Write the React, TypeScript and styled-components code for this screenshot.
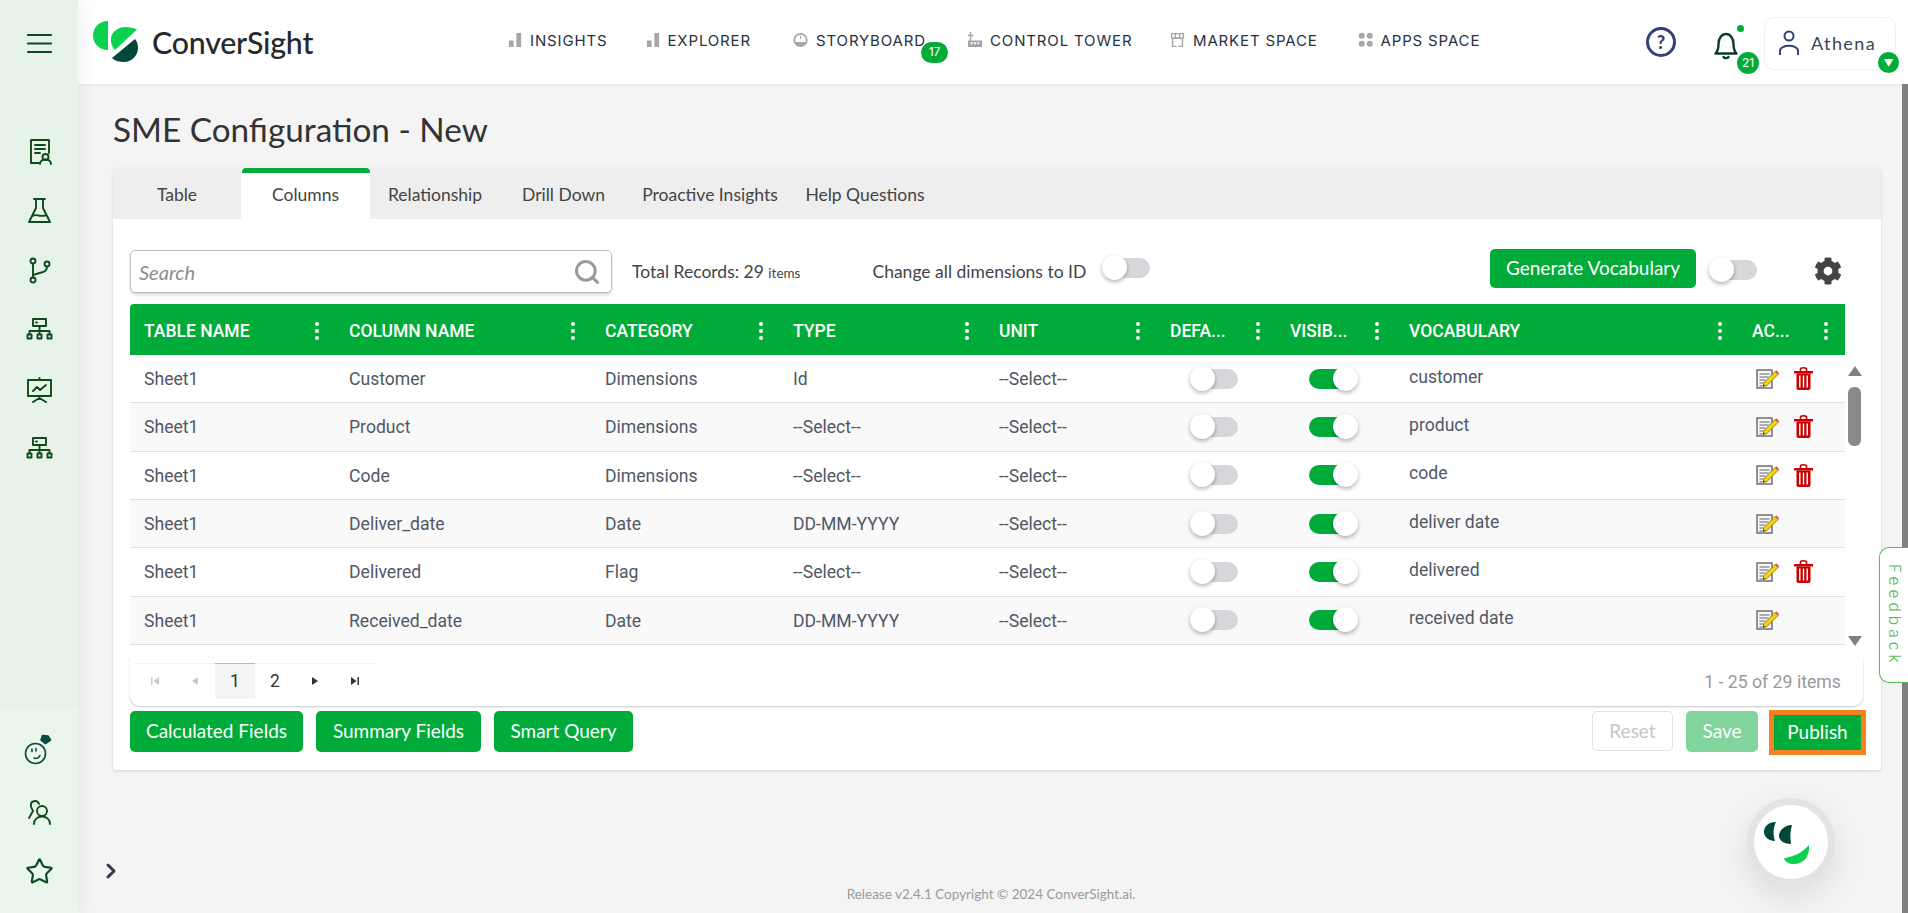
import styled, { createGlobalStyle } from "styled-components";
import { Star, Search as SearchIcon, ChevronRight } from "lucide-react";
import { FaCog } from "react-icons/fa";

const GREEN = "#00ab3a";
const SIDE_INK = "#0f4a1e";
const COLUMNS = "206px 256px 188px 206px 171px 120px 119px 343px 106px";

const GlobalStyle = createGlobalStyle`
  html, body {
    margin: 0;
    height: 100%;
    overflow: hidden;
    background: #f4f4f4;
    font-family: Lato, "Open Sans", sans-serif;
  }
  * { box-sizing: border-box; }
`;

const Shell = styled.div`
  display: flex;
  width: 100%;
  height: 913px;
  position: relative;
  overflow: hidden;
`;

const Sidebar = styled.aside`
  width: 78px;
  flex: none;
  display: flex;
  flex-direction: column;
  background: #e7f3e8;
  box-shadow: 6px 0 14px rgba(0, 0, 0, 0.05);
  z-index: 2;
`;

const SideTop = styled.div`
  flex: 1;
  display: flex;
  flex-direction: column;
  align-items: center;
  gap: 30.6px;
`;

const SideBottom = styled.div`
  height: 204px;
  flex: none;
  display: flex;
  flex-direction: column;
  align-items: center;
  gap: 30.6px;
  padding-top: 28px;
  background: #eaf5ec;
  border-top: 1px solid #eef6ef;
`;

const Burger = styled.div`
  height: 136.5px;
  padding-top: 28.5px;
  margin-bottom: -30.6px;
  display: flex;
  justify-content: center;
  flex: none;
`;

const SideIcon = styled.svg<{ $w?: number }>`
  width: 29px;
  height: 29px;
  fill: none;
  stroke: ${SIDE_INK};
  stroke-width: ${(p) => p.$w ?? 1.9};
  stroke-linecap: round;
  stroke-linejoin: round;
  flex: none;
  overflow: visible;
`;

const Column = styled.div`
  flex: 1;
  min-width: 0;
  display: flex;
  flex-direction: column;
`;

const Header = styled.header`
  height: 84px;
  flex: none;
  background: #fff;
  display: flex;
  align-items: flex-start;
  position: relative;
  box-shadow: 0 1px 3px rgba(0, 0, 0, 0.05);
`;

const LogoBox = styled.div`
  width: 429px;
  flex: none;
  display: flex;
  align-items: center;
  padding: 20px 0 0 15px;
  gap: 13px;
`;

const LogoText = styled.span`
  font-family: Lato, sans-serif;
  font-size: 30.3px;
  font-weight: 500;
  color: #26282b;
  letter-spacing: -0.2px;
  line-height: 42px;
  margin-top: 1px;
`;

const Nav = styled.nav`
  display: flex;
  height: 80px;
  align-items: center;
`;

const NavItem = styled.div<{ $w: number }>`
  width: ${(p) => p.$w}px;
  display: flex;
  align-items: center;
  gap: 7px;
  font-family: Inter, sans-serif;
  font-size: 15px;
  font-weight: 400;
  letter-spacing: 0.85px;
  color: #27323f;
  white-space: nowrap;
  position: relative;
`;

const NavGlyph = styled.svg`
  width: 16px;
  height: 16px;
  fill: #a6a6a6;
  flex: none;
`;

const Pill = styled.span`
  position: absolute;
  background: ${GREEN};
  color: #fff;
  font-family: Inter, sans-serif;
  font-size: 12px;
  letter-spacing: 0;
  line-height: 1;
  display: flex;
  align-items: center;
  justify-content: center;
`;

const StoryBadge = styled(Pill)`
  left: 128px;
  top: 11px;
  width: 27px;
  height: 21px;
  border-radius: 11px;
`;

const HeaderRight = styled.div`
  margin-left: auto;
  display: flex;
  align-items: flex-start;
  padding: 17px 12px 0 0;
`;

const HelpCircle = styled.div`
  width: 30px;
  height: 30px;
  margin: 10px 38px 0 0;
  border: 3px solid #33407a;
  border-radius: 50%;
  color: #33407a;
  font-size: 18px;
  font-weight: 900;
  display: flex;
  align-items: center;
  justify-content: center;
`;

const BellBox = styled.div`
  width: 38px;
  height: 40px;
  margin: 15px 12px 0 0;
  position: relative;
`;

const BellDot = styled.span`
  position: absolute;
  left: 22.5px;
  top: -7.5px;
  width: 7px;
  height: 7px;
  border-radius: 50%;
  background: ${GREEN};
`;

const BellBadge = styled(Pill)`
  left: 23px;
  top: 20px;
  width: 22px;
  height: 22px;
  border-radius: 50%;
`;

const UserBox = styled.div`
  width: 132px;
  height: 53px;
  padding: 0 0 2px 12px;
  border: 1px solid #eef0f2;
  border-radius: 10px;
  display: flex;
  align-items: center;
  gap: 10px;
  font-size: 18px;
  letter-spacing: 1.4px;
  color: #3a4354;
  position: relative;
`;

const UserCaret = styled(Pill)`
  right: -4px;
  top: 34px;
  width: 21px;
  height: 21px;
  border-radius: 50%;
  font-size: 10px;
`;

const Main = styled.main`
  flex: 1;
  min-height: 0;
  display: flex;
  flex-direction: column;
  padding: 0 27px 0 35px;
`;

const Title = styled.h1`
  margin: 0;
  height: 84px;
  display: flex;
  align-items: center;
  padding-top: 6px;
  font-size: 33.3px;
  font-weight: 400;
  color: #333;
`;

const Card = styled.section`
  height: 602px;
  background: #fff;
  border-radius: 3px;
  box-shadow: 0 1px 3px rgba(0, 0, 0, 0.14);
  flex: none;
`;

const Tabs = styled.div`
  height: 51px;
  display: flex;
  background: #eeeeee;
  border-radius: 3px 3px 0 0;
`;

const Tab = styled.div<{ $w: number; $active?: boolean }>`
  width: ${(p) => p.$w}px;
  padding-top: 2.5px;
  display: flex;
  align-items: center;
  justify-content: center;
  font-size: 17.5px;
  color: #444;
  background: ${(p) => (p.$active ? "#fff" : "transparent")};
  position: relative;
  &::before {
    content: "";
    display: ${(p) => (p.$active ? "block" : "none")};
    position: absolute;
    left: 1px;
    right: 0;
    top: 0;
    height: 5px;
    border-radius: 4px 4px 0 0;
    background: ${GREEN};
  }
`;

const Body = styled.div`
  padding: 30px 18px 0 17px;
`;

const Toolbar = styled.div`
  height: 55px;
  display: flex;
  align-items: flex-start;
`;

const SearchBox = styled.div`
  width: 482px;
  height: 43px;
  margin-top: 1px;
  padding: 0 10px 0 8px;
  display: flex;
  align-items: center;
  justify-content: space-between;
  background: #fff;
  border: 1px solid #b9bec6;
  border-radius: 5px;
  box-shadow: 0 2px 3px rgba(70, 80, 100, 0.2);
  font-size: 20px;
  font-style: italic;
  color: #8d8d8d;
`;

const ToolText = styled.div<{ $ml: number }>`
  margin: 12px 0 0 ${(p) => p.$ml}px;
  font-size: 17.5px;
  color: #444;
  white-space: nowrap;
  line-height: 22px;
`;

const Small = styled.span`
  font-size: 13.5px;
`;

const Switch = styled.div<{ $on?: boolean }>`
  width: 49px;
  height: 26px;
  position: relative;
  flex: none;
  &::before {
    content: "";
    position: absolute;
    left: ${(p) => (p.$on ? "0" : "6px")};
    right: ${(p) => (p.$on ? "6px" : "1px")};
    top: 3px;
    height: 20px;
    border-radius: 10px;
    background: ${(p) => (p.$on ? GREEN : "#d6d7da")};
  }
  &::after {
    content: "";
    position: absolute;
    left: ${(p) => (p.$on ? "24px" : "0")};
    top: 0;
    width: 25px;
    height: 25px;
    border-radius: 50%;
    background: #fff;
    box-shadow: 0 2px 4px rgba(0, 0, 0, 0.3);
  }
`;

const ToolSwitch = styled(Switch)<{ $ml: number; $mt: number }>`
  margin: ${(p) => p.$mt}px 0 0 ${(p) => p.$ml}px;
`;

const GreenButton = styled.button<{ $w: number }>`
  width: ${(p) => p.$w}px;
  height: 41px;
  flex: none;
  border: 0;
  border-radius: 5px;
  background: ${GREEN};
  color: #fff;
  font-family: Lato, sans-serif;
  font-size: 19px;
  padding: 0 0 3px;
`;

const GenerateButton = styled(GreenButton)`
  margin: 0 0 0 auto;
  height: 39px;
`;

const Gear = styled.div`
  width: 30px;
  margin: 8px 19px 0 56px;
  color: #444;
  display: flex;
`;

const TableArea = styled.div`
  display: flex;
  height: 353px;
`;

const Table = styled.div`
  width: 1715px;
  flex: none;
  display: flex;
  flex-direction: column;
`;

const HeadRow = styled.div`
  height: 51px;
  flex: none;
  display: grid;
  grid-template-columns: ${COLUMNS};
  background: ${GREEN};
  border-radius: 4px 0 0 0;
`;

const HeadCell = styled.div`
  padding: 2px 17px 0 13px;
  display: flex;
  align-items: center;
  justify-content: space-between;
  color: #fff;
  font-family: Roboto, sans-serif;
  font-size: 17.5px;
  font-weight: 500;
  white-space: nowrap;
  &:first-child {
    padding-left: 14px;
  }
`;

const Dots = styled.span`
  display: flex;
  flex-direction: column;
  gap: 3px;
  & > i {
    width: 4px;
    height: 4px;
    border-radius: 50%;
    background: #fff;
  }
`;

const Row = styled.div<{ $alt?: boolean }>`
  height: 48.33px;
  flex: none;
  display: grid;
  grid-template-columns: ${COLUMNS};
  background: ${(p) => (p.$alt ? "#f9f9f9" : "#fff")};
  border-bottom: 1px solid #dedfe1;
`;

const Cell = styled.div<{ $up?: boolean }>`
  padding: ${(p) => (p.$up ? "0 0 4px 13px" : "1px 0 0 13px")};
  display: flex;
  align-items: center;
  font-family: Roboto, sans-serif;
  font-size: 17.6px;
  color: #505866;
  white-space: nowrap;
  &:first-child {
    padding-left: 14px;
  }
`;

const SwitchCell = styled.div<{ $pr: number }>`
  display: flex;
  align-items: center;
  justify-content: center;
  padding-right: ${(p) => p.$pr}px;
`;

const ActionCell = styled.div`
  display: flex;
  align-items: center;
  gap: 15px;
  padding-left: 17px;
`;

const Scroller = styled.div`
  flex: 1;
  padding: 62px 1px 11px 2px;
  display: flex;
  flex-direction: column;
  align-items: center;
`;

const ArrowUp = styled.span`
  width: 0;
  height: 0;
  border-left: 7px solid transparent;
  border-right: 7px solid transparent;
  border-bottom: 10px solid #808080;
`;

const ArrowDown = styled.span`
  width: 0;
  height: 0;
  margin-top: auto;
  border-left: 7px solid transparent;
  border-right: 7px solid transparent;
  border-top: 10px solid #808080;
`;

const Thumb = styled.span`
  width: 13px;
  height: 59px;
  margin-top: 11px;
  border-radius: 6px;
  background: #8a8a8a;
`;

const Pager = styled.div`
  height: 49px;
  width: 1733px;
  display: flex;
  align-items: center;
  justify-content: space-between;
  padding: 0 22px 0 0;
  background: #fff;
  border-radius: 0 0 10px 10px;
  box-shadow: 0 1px 2px rgba(60, 70, 90, 0.3);
`;

const PageList = styled.div`
  display: flex;
  padding-left: 5px;
`;

const PageButton = styled.div<{ $active?: boolean; $dim?: boolean }>`
  width: 40px;
  height: 36px;
  margin-top: -2px;
  display: flex;
  align-items: center;
  justify-content: center;
  font-family: Roboto, sans-serif;
  font-size: 17.5px;
  color: ${(p) => (p.$dim ? "#c9c9c9" : "#333")};
  background: ${(p) => (p.$active ? "#f5f5f5" : "#fff")};
  border-top: 1px solid ${(p) => (p.$active ? "#bbb" : "#f3f3f3")};
`;

const PageInfo = styled.div`
  font-family: Roboto, sans-serif;
  font-size: 17.7px;
  color: #9a9a9a;
`;

const Actions = styled.div`
  display: flex;
  align-items: flex-start;
  margin-top: 5px;
  width: 1736px;
  gap: 13px;
`;

const Reset = styled.button`
  width: 81px;
  height: 40px;
  margin-left: auto;
  padding: 0 0 2px;
  border: 1px solid #e3e3e3;
  border-radius: 5px;
  background: #fff;
  color: #c6c6c6;
  font-family: Lato, sans-serif;
  font-size: 19px;
`;

const Save = styled(GreenButton)`
  background: #80d49c;
`;

const Publish = styled.button`
  width: 97px;
  height: 45px;
  margin-top: -1px;
  margin-left: -2px;
  padding: 0 0 3px;
  border: 5px solid #f58220;
  background: ${GREEN};
  color: #fff;
  font-family: Lato, sans-serif;
  font-size: 19px;
`;

const Foot = styled.div`
  flex: 1;
  display: flex;
  flex-direction: column;
`;

const Toggle = styled.div`
  margin: 89px 0 0 -14px;
  height: 24px;
  color: #333a4a;
  display: flex;
`;

const Copy = styled.div`
  margin-top: 3px;
  padding-right: 12px;
  text-align: center;
  font-size: 13.5px;
  color: #9b9b9b;
`;

const Feedback = styled.div`
  position: absolute;
  right: 0;
  top: 547px;
  width: 29px;
  height: 136px;
  display: flex;
  align-items: center;
  justify-content: center;
  writing-mode: vertical-rl;
  border: 1px solid #52b95f;
  border-right: 0;
  border-radius: 10px 0 0 10px;
  background: #fff;
  color: #52b95f;
  font-family: Inter, sans-serif;
  font-size: 15.5px;
  font-weight: 300;
  letter-spacing: 4px;
  z-index: 4;
`;

const Chat = styled.div`
  position: absolute;
  left: 1747px;
  top: 798px;
  width: 88px;
  height: 88px;
  border-radius: 50%;
  background: #fff;
  border: 7px solid #e3e3e3;
  box-shadow: 0 12px 34px rgba(0, 0, 0, 0.1);
  display: flex;
  align-items: center;
  justify-content: center;
`;

const PageBar = styled.div`
  position: absolute;
  right: 0;
  top: 84px;
  bottom: 0;
  width: 6px;
  background: #7f7f7f;
  z-index: 3;
`;

const MiniIcon = styled.svg`
  flex: none;
`;

const EditIcon = () => (
  <MiniIcon width="23" height="20" viewBox="0 0 23 20">
    <path d="M1 1h15v18H1z" fill="#f5f5f5" stroke="#707070" strokeWidth="1.5" />
    <path d="M3.500 5h10M3.500 8h9M3.500 11h6M3.500 14h4M3.500 17h3" stroke="#666" strokeWidth="1.1" />
    <path d="M7 17.500l1-4L19 2.500l3 3L11 16.500z" fill="#f5d312" stroke="#6b5b00" strokeWidth="0.7" />
    <path d="M19 2.500l1.200-1.200 3 3L22 5.500z" fill="#e2503d" />
    <path d="M7 17.500l.5-2 1.500 1.500z" fill="#333" />
  </MiniIcon>
);

const TrashIcon = () => (
  <MiniIcon width="19" height="23" viewBox="0 0 19 23">
    <path d="M6.500 4V2c0-1 1-1.200 3-1.200s3 .2 3 1.200v2" fill="none" stroke="#c70000" strokeWidth="1.600" />
    <path d="M0 4h19v2.500H0z" fill="#c70000" />
    <path d="M2.500 6.500h14V21c0 1.300-.8 2-2 2h-10c-1.200 0-2-.7-2-2z" fill="#c70000" />
    <path d="M5.800 8.500v12M9.500 8.500v12M13.200 8.500v12" stroke="#fff" strokeWidth="1.400" />
  </MiniIcon>
);

const Logo = () => (
  <svg width="46" height="42" viewBox="0 0 46 42">
    <path d="M15 0C6 0 0 7 0 14.500S6 29 15 29z" fill="#0bd24e" />
    <path d="M44 8.500L22 29c-3-3-4.500-8-4-12C19 10 26 6 32 6c5 0 9 1 12 2.500z" fill="#0bd24e" />
    <path d="M42 18L19 37c3 3 8 4 12 4 8 0 14-7 14-14 0-3-1-7-3-9z" fill="#00483a" />
  </svg>
);

const PagerGlyph = ({ d }: { d: string }) => (
  <svg width="14" height="14" viewBox="0 0 14 14" fill="currentColor">
    <path d={d} />
  </svg>
);

type NavEntry = { label: string; w: number; glyph: React.ReactNode; badge?: string };

const navItems: NavEntry[] = [
  { label: "INSIGHTS", w: 137.5, glyph: <path d="M2 9h5v7H2zM10 1h5v15h-5z" /> },
  { label: "EXPLORER", w: 148.5, glyph: <path d="M2 9h5v7H2zM10 1h5v15h-5z" /> },
  {
    label: "STORYBOARD",
    w: 174,
    glyph: <path fillRule="evenodd" d="M8 1a7.500 7.500 0 1 1 0 15A7.500 7.500 0 0 1 8 1zm0 2a5.500 5.500 0 0 0-5.200 7.500h10.400A5.500 5.500 0 0 0 8 3zM7.400 4h1.200v3.500H7.400z" />,
    badge: "17",
  },
  {
    label: "CONTROL TOWER",
    w: 203,
    glyph: <path fillRule="evenodd" d="M3 0h1.500v3H7v1.500H4.500V9H16v7H1V9h2V4.500H1V3h2zM4 11v2h2v-2zm3.500 0v2h2v-2zm3.500 0v2h2v-2z" />,
  },
  {
    label: "MARKET SPACE",
    w: 187.5,
    glyph: <path fillRule="evenodd" d="M1 1h14v6H14v9H9v-1.500h3.500V7.500h-9v7H7V16H2V7H1zm1.500 1.500v3h2.500v-3zm4 0v3h3v-3zm4.500 0v3h2.500v-3z" />,
  },
  {
    label: "APPS SPACE",
    w: 120,
    glyph: (
      <>
        <circle cx="4" cy="4" r="3.200" />
        <circle cx="12.500" cy="4" r="3.200" />
        <circle cx="4" cy="12.500" r="3.200" />
        <circle cx="12.500" cy="12.500" r="3.200" />
      </>
    ),
  },
];

const heads = ["TABLE NAME", "COLUMN NAME", "CATEGORY", "TYPE", "UNIT", "DEFA...", "VISIB...", "VOCABULARY", "AC..."];

const rows = [
  { col: "Customer", cat: "Dimensions", type: "Id", vocab: "customer", trash: true },
  { col: "Product", cat: "Dimensions", type: "--Select--", vocab: "product", trash: true },
  { col: "Code", cat: "Dimensions", type: "--Select--", vocab: "code", trash: true },
  { col: "Deliver_date", cat: "Date", type: "DD-MM-YYYY", vocab: "deliver date", trash: false },
  { col: "Delivered", cat: "Flag", type: "--Select--", vocab: "delivered", trash: true },
  { col: "Received_date", cat: "Date", type: "DD-MM-YYYY", vocab: "received date", trash: false },
];

const tabs = [
  { label: "Table", w: 128 },
  { label: "Columns", w: 129, active: true },
  { label: "Relationship", w: 130 },
  { label: "Drill Down", w: 127 },
  { label: "Proactive Insights", w: 166 },
  { label: "Help Questions", w: 144 },
];

const App = () => {
  return (
    <Shell>
      <GlobalStyle />
      <Sidebar>
        <SideTop>
          <Burger>
            <SideIcon viewBox="0 0 29 29" $w={2.2}>
              <path d="M3 6h23M3 14.500h23M3 23h23" />
            </SideIcon>
          </Burger>
          <SideIcon viewBox="0 0 29 29">
            <path d="M14 26H6V3h18v13M10 8h10M10 12h10M10 16h5" />
            <circle cx="20.500" cy="20" r="3" />
            <path d="M15 27c0-6 11-6 11 0" />
          </SideIcon>
          <SideIcon viewBox="0 0 29 29">
            <path d="M9 3h11M11 3v9L4 26h21l-7-14V3M7.500 20c4-3 6 2 14-1" />
          </SideIcon>
          <SideIcon viewBox="0 0 29 29">
            <circle cx="8" cy="5" r="2.500" />
            <circle cx="8" cy="24" r="2.500" />
            <circle cx="22" cy="8" r="2.500" />
            <path d="M8 7.500v14M8 19l10-3c3-1 4-3 4-5.500" />
          </SideIcon>
          <SideIcon viewBox="0 0 29 29">
            <path d="M8 4h13v7H8zM14.500 11v5M4.500 19v-3h20v3M14.500 16v3M11 7.500h1" />
            <path d="M2.500 19.500h4v4h-4zM12.500 19.500h4v4h-4zM22.500 19.500h4v4h-4z" />
          </SideIcon>
          <SideIcon viewBox="0 0 29 29">
            <path d="M3 5h23v16H3zM14.500 3v2M14.500 21v2M8 27l6.500-4 6.500 4M8 16l4-4 3 3 6-5" />
          </SideIcon>
          <SideIcon viewBox="0 0 29 29">
            <path d="M8 4h13v7H8zM14.500 11v5M4.500 19v-3h20v3M14.500 16v3M11 7.500h1" />
            <path d="M2.500 19.500h4v4h-4zM12.500 19.500h4v4h-4zM22.500 19.500h4v4h-4z" />
          </SideIcon>
        </SideTop>
        <SideBottom>
          <SideIcon viewBox="0 0 29 29" $w={1.6} style={{ stroke: "#0b4a40" }}>
            <circle cx="10.500" cy="15.500" r="10" />
            <path d="M7 11v2.500M11 10.500V13M9 20c2.500 1 5 0 6-2.500" />
            <path d="M16 2l1.500-4.500 5.500.5 2.500 4-5 3.500z" fill="#0b4a40" />
          </SideIcon>
          <SideIcon viewBox="0 0 29 29">
            <circle cx="17" cy="13" r="5" />
            <path d="M9 26c0-10 16-10 16 0M14 6c-2-5-9-3-8 2 0 3 2 4 2 5l-4 7" />
          </SideIcon>
          <Star size={29} color={SIDE_INK} strokeWidth={1.8} />
        </SideBottom>
      </Sidebar>
      <Column>
        <Header>
          <LogoBox>
            <Logo />
            <LogoText>ConverSight</LogoText>
          </LogoBox>
          <Nav>
            {navItems.map((item) => (
              <NavItem key={item.label} $w={item.w}>
                <NavGlyph viewBox="0 0 17 17">{item.glyph}</NavGlyph>
                {item.label}
                {item.badge ? <StoryBadge>{item.badge}</StoryBadge> : null}
              </NavItem>
            ))}
          </Nav>
          <HeaderRight>
            <HelpCircle>?</HelpCircle>
            <BellBox>
              <svg width="24" height="30" viewBox="0 0 24 30" fill="none" stroke="#0b3b2e" strokeWidth="2.400" strokeLinecap="round" strokeLinejoin="round">
                <path d="M1.500 21.500h21c-2-2-3-4-3-9.500 0-6-3.500-10-7.500-10S4.500 6 4.500 12c0 5.500-1 7.500-3 9.500z" />
                <path d="M9.500 25c1 1.500 4 1.500 5 0" />
              </svg>
              <BellDot />
              <BellBadge>21</BellBadge>
            </BellBox>
            <UserBox>
              <svg width="24" height="28" viewBox="0 0 24 28" fill="none" stroke="#33407a" strokeWidth="2">
                <circle cx="12" cy="7" r="4.500" />
                <path d="M3 26v-4c0-7 18-7 18 0v4" />
              </svg>
              Athena
              <UserCaret>▼</UserCaret>
            </UserBox>
          </HeaderRight>
        </Header>
        <Main>
          <Title>SME Configuration - New</Title>
          <Card>
            <Tabs>
              {tabs.map((tab) => (
                <Tab key={tab.label} $w={tab.w} $active={tab.active}>
                  {tab.label}
                </Tab>
              ))}
            </Tabs>
            <Body>
              <Toolbar>
                <SearchBox>
                  Search
                  <SearchIcon size={28} color="#9a9a9a" strokeWidth={2.6} />
                </SearchBox>
                <ToolText $ml={20}>
                  Total Records: 29 <Small>items</Small>
                </ToolText>
                <ToolText $ml={72}>Change all dimensions to ID</ToolText>
                <ToolSwitch $ml={15.5} $mt={6} />
                <GenerateButton $w={206}>Generate Vocabulary</GenerateButton>
                <ToolSwitch $ml={13} $mt={8} />
                <Gear>
                  <FaCog size={28} />
                </Gear>
              </Toolbar>
              <TableArea>
                <Table>
                  <HeadRow>
                    {heads.map((head) => (
                      <HeadCell key={head}>
                        {head}
                        <Dots>
                          <i />
                          <i />
                          <i />
                        </Dots>
                      </HeadCell>
                    ))}
                  </HeadRow>
                  {rows.map((row, index) => (
                    <Row key={row.col} $alt={index % 2 === 1}>
                      <Cell>Sheet1</Cell>
                      <Cell>{row.col}</Cell>
                      <Cell>{row.cat}</Cell>
                      <Cell>{row.type}</Cell>
                      <Cell>--Select--</Cell>
                      <SwitchCell $pr={5}>
                        <Switch />
                      </SwitchCell>
                      <SwitchCell $pr={7}>
                        <Switch $on />
                      </SwitchCell>
                      <Cell $up>{row.vocab}</Cell>
                      <ActionCell>
                        <EditIcon />
                        {row.trash ? <TrashIcon /> : null}
                      </ActionCell>
                    </Row>
                  ))}
                </Table>
                <Scroller>
                  <ArrowUp />
                  <Thumb />
                  <ArrowDown />
                </Scroller>
              </TableArea>
              <Pager>
                <PageList>
                  <PageButton $dim>
                    <PagerGlyph d="M3 3h1.500v8H3zM11 3v8L5.500 7z" />
                  </PageButton>
                  <PageButton $dim>
                    <PagerGlyph d="M10 3v8L4 7z" />
                  </PageButton>
                  <PageButton $active>1</PageButton>
                  <PageButton>2</PageButton>
                  <PageButton>
                    <PagerGlyph d="M4 3v8l6-4z" />
                  </PageButton>
                  <PageButton>
                    <PagerGlyph d="M3 3v8l5.500-4zM9.500 3H11v8H9.500z" />
                  </PageButton>
                </PageList>
                <PageInfo>1 - 25 of 29 items</PageInfo>
              </Pager>
              <Actions>
                <GreenButton $w={173}>Calculated Fields</GreenButton>
                <GreenButton $w={165}>Summary Fields</GreenButton>
                <GreenButton $w={139}>Smart Query</GreenButton>
                <Reset>Reset</Reset>
                <Save $w={72}>Save</Save>
                <Publish>Publish</Publish>
              </Actions>
            </Body>
          </Card>
          <Foot>
            <Toggle>
              <ChevronRight size={24} strokeWidth={3} />
            </Toggle>
            <Copy>Release v2.4.1 Copyright © 2024 ConverSight.ai.</Copy>
          </Foot>
        </Main>
      </Column>
      <Feedback>Feedback</Feedback>
      <Chat>
        <svg width="60" height="60" viewBox="-30 -30 60 60">
          <path d="M-15-20C-24-20-27-14-27-10-27-5-22-1-16-1-18-7-18-14-15-20Z" fill="#00483a" />
          <path d="M1-17C-7-17-12-11-12-6-12-1-6 2 0 2-1-5-1-11 1-17Z" fill="#00483a" />
          <path d="M18 3C19 14 13 22 3 22-2 22-6 20-7 16 3 15 12 10 18 3Z" fill="#0bd24e" />
        </svg>
      </Chat>
      <PageBar />
    </Shell>
  );
};

export default App;
